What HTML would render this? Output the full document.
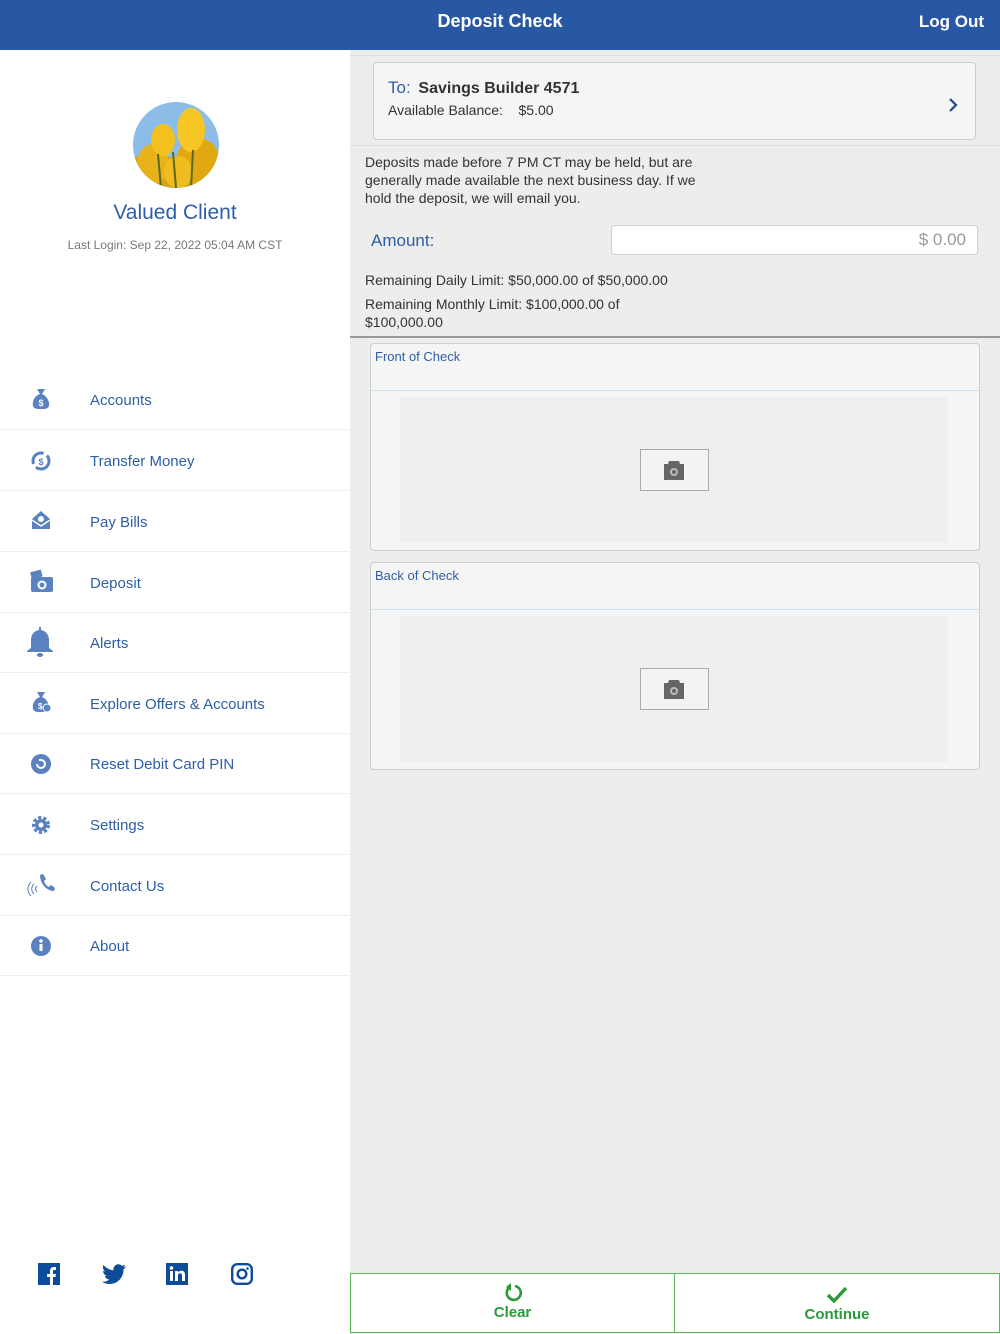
<!DOCTYPE html>
<html><head><meta charset="utf-8"><style>
*{box-sizing:border-box;margin:0;padding:0}
body{width:1000px;height:1334px;position:relative;font-family:"Liberation Sans",sans-serif;background:#ededed;overflow:hidden}
.abs{position:absolute}
.hdr{left:0;top:0;width:1000px;height:50px;background:#2857a4;color:#fff;font-weight:bold}
.left{left:0;top:50px;width:350px;height:1284px;background:#fff}
.row{position:absolute;left:0;width:350px;height:61px;border-bottom:1.5px solid #eee;color:#2d5fa6;font-size:15px}
.row span{position:absolute;left:90px;top:23px}
.row svg{position:absolute;left:26px;top:15px}
.box{background:#f5f5f5;border:1.5px solid #c5d2cf;border-radius:4px}
.t{color:#333;font-size:14px}
</style></head><body>
<div class="abs hdr"><div class="abs" style="left:0;width:1000px;top:11px;text-align:center;font-size:18px">Deposit Check</div><div class="abs" style="right:16px;top:12px;font-size:17px">Log Out</div></div>
<div class="abs left">
 <svg class="abs" style="left:133px;top:52px" width="86" height="86" viewBox="0 0 86 86">
  <defs><clipPath id="c"><circle cx="43" cy="43" r="43"/></clipPath></defs>
  <g clip-path="url(#c)">
   <rect width="86" height="86" fill="#8cbde8"/>
   <rect y="55" width="86" height="31" fill="#d9a414"/>
   <ellipse cx="20" cy="62" rx="16" ry="20" fill="#e8b31a"/>
   <ellipse cx="65" cy="60" rx="22" ry="24" fill="#e0a912"/>
   <ellipse cx="30" cy="38" rx="12" ry="16" fill="#f2c11f"/>
   <ellipse cx="58" cy="28" rx="14" ry="22" fill="#f5c624"/>
   <ellipse cx="45" cy="70" rx="14" ry="16" fill="#f0bc20"/>
   <path d="M40 50l3 36M60 48l-2 38M25 52l3 34" stroke="#5a6a1a" stroke-width="2"/>
  </g>
 </svg>
 <div class="abs" style="left:0;width:350px;top:151px;text-align:center;color:#2d5fa6;font-size:21px">Valued Client</div>
 <div class="abs" style="left:0;width:350px;top:188px;text-align:center;color:#777;font-size:12px">Last Login: Sep 22, 2022 05:04 AM CST</div>
</div>
<div class="row" style="top:369px"><svg width="30" height="30" viewBox="0 0 30 30"><path d="M11 5h8l-3 5h-2zM14 10c-6 2-8 8-7 12 1 3 4 3 8 3s7 0 8-3c1-4-2-10-7-12z" fill="#5b82c0"/><text x="15" y="22" font-size="9" fill="#fff" text-anchor="middle" font-weight="bold">$</text></svg><span>Accounts</span></div>
<div class="row" style="top:430px"><svg width="30" height="30" viewBox="0 0 30 30"><circle cx="15" cy="16" r="8" fill="none" stroke="#5b82c0" stroke-width="3" stroke-dasharray="18 4"/><text x="15" y="20" font-size="9" fill="#5b82c0" text-anchor="middle" font-weight="bold">$</text></svg><span>Transfer Money</span></div>
<div class="row" style="top:491px"><svg width="30" height="30" viewBox="0 0 30 30"><path d="M6 13l9-8 9 8v10H6z" fill="#5b82c0"/><path d="M6 14l9 6 9-6" fill="none" stroke="#fff" stroke-width="1.5"/><circle cx="15" cy="13" r="3" fill="#fff"/></svg><span>Pay Bills</span></div>
<div class="row" style="top:552px"><svg width="30" height="30" viewBox="0 0 30 30"><rect x="5" y="4" width="11" height="7" fill="#5b82c0" transform="rotate(-15 10 8)"/><rect x="5" y="10" width="22" height="15" rx="2" fill="#5b82c0"/><circle cx="16" cy="18" r="4.5" fill="#fff"/><circle cx="16" cy="18" r="2.5" fill="#5b82c0"/></svg><span>Deposit</span></div>
<div class="row" style="top:612px"><svg width="34" height="34" viewBox="0 0 34 34" style="left:24px;top:12px"><path d="M15 3h2v3c5 1 8 5 8 10v8l4 3v1H3v-1l4-3v-8c0-5 3-9 8-10z" fill="#5b82c0"/><ellipse cx="16" cy="31" rx="3" ry="2" fill="#5b82c0"/></svg><span>Alerts</span></div>
<div class="row" style="top:673px"><svg width="30" height="30" viewBox="0 0 30 30"><path d="M11 4h8l-3 5h-2zM14 9c-6 2-8 8-7 12 1 3 4 3 8 3s7 0 8-3c1-4-2-10-7-12z" fill="#5b82c0"/><text x="12" y="21" font-size="8" fill="#fff" font-weight="bold">$</text><circle cx="21" cy="20" r="4" fill="#5b82c0" stroke="#fff"/></svg><span>Explore Offers &amp; Accounts</span></div>
<div class="row" style="top:733px"><svg width="30" height="30" viewBox="0 0 30 30"><circle cx="15" cy="16" r="10" fill="#5b82c0"/><path d="M11 16a4 4 0 1 0 4-4h-2" fill="none" stroke="#fff" stroke-width="2"/></svg><span>Reset Debit Card PIN</span></div>
<div class="row" style="top:794px"><svg width="30" height="30" viewBox="0 0 30 30"><circle cx="15" cy="16" r="7" fill="none" stroke="#5b82c0" stroke-width="4" stroke-dasharray="3 2"/><circle cx="15" cy="16" r="6" fill="#5b82c0"/><circle cx="15" cy="16" r="2.5" fill="#fff"/></svg><span>Settings</span></div>
<div class="row" style="top:855px"><svg width="30" height="30" viewBox="0 0 30 30"><path d="M14 5l3-1 3 5-2 2c1 3 3 5 5 6l2-2 4 3-1 3c-7 0-14-7-14-16z" fill="#5b82c0"/><path d="M8 14c-3 3-3 7 0 10M5 12c-4 4-4 10 0 14M11 16c-2 2-2 4 0 6" stroke="#5b82c0" fill="none"/></svg><span>Contact Us</span></div>
<div class="row" style="top:915px"><svg width="30" height="30" viewBox="0 0 30 30"><circle cx="15" cy="16" r="10" fill="#5b82c0"/><rect x="13.5" y="14" width="3" height="7" fill="#fff"/><circle cx="15" cy="11" r="1.8" fill="#fff"/></svg><span>About</span></div>
<svg class="abs" style="left:38px;top:1263px" width="22" height="22" viewBox="0 0 22 22"><rect width="22" height="22" fill="#0d4c9a"/><path d="M12 22v-8h-3v-3h3V8c0-3 2-4 4-4h2v3h-2c-1 0-1 .5-1 1v3h3l-.5 3H15v8z" fill="#fff"/></svg>
<svg class="abs" style="left:102px;top:1264px" width="24" height="20" viewBox="0 0 24 20"><path d="M24 2.5c-1 .4-2 .7-3 .8 1-.6 2-1.6 2-2.7-1 .6-2 1-3 1.2a5 5 0 0 0-8.5 4.5C7.500 6 4 4 1.5 1c-1.5 2.500 0 5 1.500 6.500-1 0-1.500-.3-2-.6 0 2.500 2 4.500 4 5-1 .3-1.500.3-2.200.1.5 2 2.500 3.400 4.600 3.500C5.500 17 3 18 0 17.700 2 19 4.500 20 7.500 20 16.500 20 21.500 12.500 21.500 6v-.6c1-.7 1.800-1.600 2.500-2.600z" fill="#0d4c9a"/></svg>
<svg class="abs" style="left:166px;top:1263px" width="22" height="22" viewBox="0 0 22 22"><rect width="22" height="22" fill="#0d4c9a"/><rect x="4" y="8" width="3" height="10" fill="#fff"/><circle cx="5.5" cy="5" r="1.8" fill="#fff"/><path d="M9 8h3v1.500c1-1.500 2-1.800 3.500-1.800C18 7.700 19 9 19 12v6h-3v-5.500c0-1.500-.5-2.300-1.700-2.300S12 11 12 12.500V18H9z" fill="#fff"/></svg>
<svg class="abs" style="left:231px;top:1263px" width="22" height="22" viewBox="0 0 22 22"><rect x="1.2" y="1.2" width="19.6" height="19.6" rx="5" fill="none" stroke="#0d4c9a" stroke-width="2.4"/><circle cx="11" cy="11" r="4.3" fill="none" stroke="#0d4c9a" stroke-width="2.4"/><circle cx="16.5" cy="5.5" r="1.3" fill="#0d4c9a"/></svg>

<div class="abs" style="left:350px;top:50px;width:650px;height:6px;border-bottom:1.5px solid #d5e2ea"></div>
<div class="abs box" style="left:373px;top:62px;width:603px;height:78px">
 <div class="abs" style="left:14px;top:15px;font-size:17px;color:#2d5fa6">To: <b style="color:#333;font-size:16px;margin-left:3px">Savings Builder 4571</b></div>
 <div class="abs t" style="left:14px;top:39px">Available Balance:&nbsp;&nbsp;&nbsp; $5.00</div>
 <svg class="abs" style="left:574px;top:34px" width="10" height="16" viewBox="0 0 10 16"><path d="M2 2l6 6-6 6" fill="none" stroke="#1d4a8a" stroke-width="2.2"/></svg>
</div>
<div class="abs" style="left:350px;top:145px;width:650px;border-top:1.5px solid #d5e2ea"></div>
<div class="abs t" style="left:365px;top:153px;width:340px;line-height:18px">Deposits made before 7 PM CT may be held, but are generally made available the next business day. If we hold the deposit, we will email you.</div>
<div class="abs" style="left:371px;top:231px;color:#2d5fa6;font-size:17px">Amount:</div>
<div class="abs" style="left:611px;top:225px;width:367px;height:30px;background:#fff;border:1.5px solid #c5d2cf;border-radius:4px;text-align:right;padding:4px 11px 0 0;color:#999;font-size:17px">$ 0.00</div>
<div class="abs t" style="left:365px;top:272px">Remaining Daily Limit: $50,000.00 of $50,000.00</div>
<div class="abs t" style="left:365px;top:295px;line-height:18px">Remaining Monthly Limit: $100,000.00 of<br>$100,000.00</div>
<div class="abs" style="left:350px;top:336px;width:650px;border-top:2px solid #999"></div>

<div class="abs box" style="left:370px;top:343px;width:610px;height:208px">
 <div class="abs" style="left:4px;top:5px;color:#2d5fa6;font-size:13px">Front of Check</div>
 <div class="abs" style="left:0;top:46px;width:100%;border-top:1px solid #cde0ec"></div>
 <div class="abs" style="left:29px;top:53px;width:548px;height:146px;background:#eeeff0"></div>
 <div class="abs" style="left:269px;top:105px;width:69px;height:42px;border:1.5px solid #aaa;background:#f3f3f3"><svg class="abs" style="left:20px;top:8px" width="26" height="23" viewBox="0 0 26 23"><path d="M8 3h10l1 3h4v16H3V6h4z" fill="#666"/><circle cx="13" cy="14" r="4" fill="#bbb"/><circle cx="13" cy="14" r="2" fill="#666"/></svg></div>
</div>
<div class="abs box" style="left:370px;top:562px;width:610px;height:208px">
 <div class="abs" style="left:4px;top:5px;color:#2d5fa6;font-size:13px">Back of Check</div>
 <div class="abs" style="left:0;top:46px;width:100%;border-top:1px solid #cde0ec"></div>
 <div class="abs" style="left:29px;top:53px;width:548px;height:146px;background:#eeeff0"></div>
 <div class="abs" style="left:269px;top:105px;width:69px;height:42px;border:1.5px solid #aaa;background:#f3f3f3"><svg class="abs" style="left:20px;top:8px" width="26" height="23" viewBox="0 0 26 23"><path d="M8 3h10l1 3h4v16H3V6h4z" fill="#666"/><circle cx="13" cy="14" r="4" fill="#bbb"/><circle cx="13" cy="14" r="2" fill="#666"/></svg></div>
</div>

<div class="abs" style="left:350px;top:1273px;width:325px;height:60px;background:#fff;border:1.5px solid #5cb85c;color:#2a9a3a;font-weight:bold;font-size:15px;text-align:center">
 <svg style="margin-top:9px" width="22" height="20" viewBox="0 0 22 20"><path d="M8 4a7 7 0 1 0 5-1" fill="none" stroke="#2a9a3a" stroke-width="2.6"/><path d="M4 4l5-4v8z" fill="#2a9a3a"/></svg>
 <div style="margin-top:-3px">Clear</div></div>
<div class="abs" style="left:674px;top:1273px;width:326px;height:60px;background:#fff;border:1.5px solid #5cb85c;color:#2a9a3a;font-weight:bold;font-size:15px;text-align:center">
 <svg style="margin-top:12px" width="22" height="17" viewBox="0 0 22 17"><path d="M2 9l6 6L20 2" fill="none" stroke="#2a9a3a" stroke-width="3.4"/></svg>
 <div style="margin-top:-1px">Continue</div></div>
</body></html>
